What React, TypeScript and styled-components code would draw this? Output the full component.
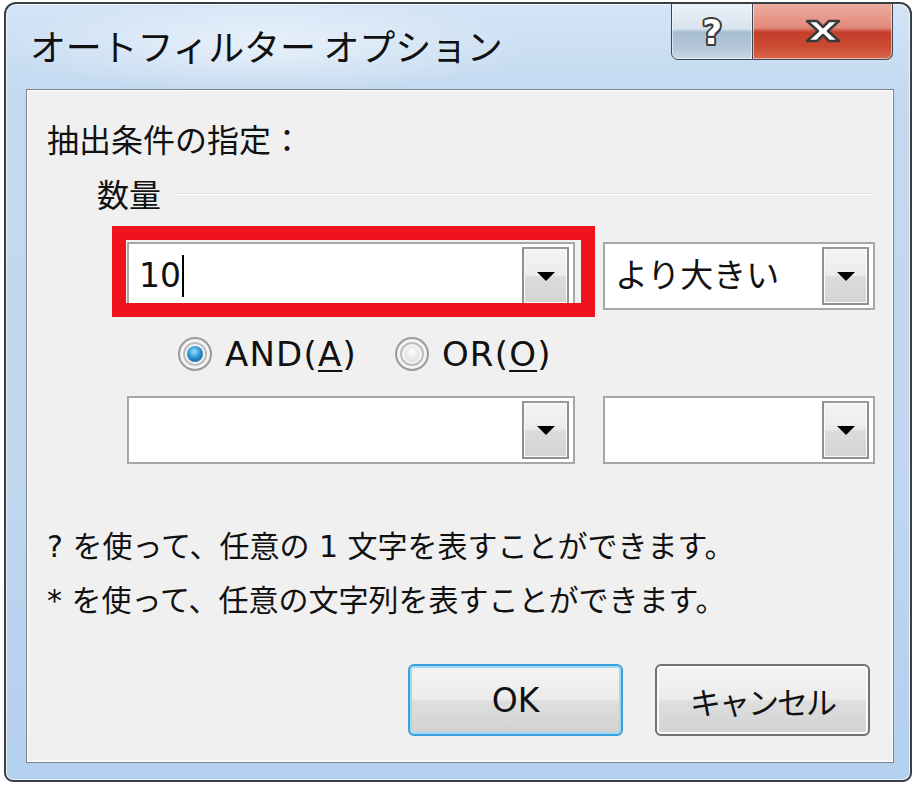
import React from 'react';
import styled, { createGlobalStyle } from 'styled-components';

const GlobalStyle = createGlobalStyle`
  html, body {
    margin: 0;
    padding: 0;
    background: #ffffff;
  }
  body {
    font-family: "DejaVu Sans", "Noto Sans CJK JP", sans-serif;
    color: #111;
  }
  * {
    box-sizing: border-box;
  }
`;

const JP = `"Noto Sans CJK JP", sans-serif`;
const MIXED = `"DejaVu Sans", "Noto Sans CJK JP", sans-serif`;

const Window = styled.div`
  width: 908px;
  height: 780px;
  margin: 2px 4px 4px 4px;
  border: 2px solid #3a3f46;
  border-radius: 12px 12px 9px 9px;
  background:
    radial-gradient(ellipse 380px 70px at 260px 40px, rgba(255, 255, 255, 0.55), rgba(255, 255, 255, 0) 70%),
    linear-gradient(180deg, #d3e4f6 0%, #c3d9f0 12%, #c0d7ef 60%, #b3d0ee 100%);
  box-shadow: inset 0 0 0 1px rgba(255, 255, 255, 0.7);
  display: flex;
  flex-direction: column;
  overflow: hidden;
`;

const TitleBar = styled.div`
  height: 85px;
  display: flex;
  justify-content: space-between;
  align-items: flex-start;
  padding: 0 17px 0 24px;
`;

const Title = styled.div`
  font-family: ${JP};
  font-size: 36px;
  line-height: 40px;
  padding-top: 21px;
  color: #101010;
  letter-spacing: -0.2px;
`;

const CaptionButtons = styled.div`
  display: flex;
  margin-top: -2px;
`;

const CaptionButton = styled.div<{ $kind: 'help' | 'close' }>`
  height: 58px;
  width: ${(p) => (p.$kind === 'help' ? '82px' : '140px')};
  display: flex;
  align-items: center;
  justify-content: center;
  border: 1px solid #3e4650;
  border-left: ${(p) => (p.$kind === 'help' ? '1px solid #3e4650' : 'none')};
  border-radius: ${(p) => (p.$kind === 'help' ? '0 0 0 7px' : '0 0 7px 0')};
  box-shadow: inset 0 0 0 1px rgba(255, 255, 255, 0.55);
  background: ${(p) =>
    p.$kind === 'help'
      ? 'linear-gradient(180deg, #eaf1f8 0%, #d9e4ef 46%, #a9bdd2 52%, #b4c7da 80%, #c9d8e7 100%)'
      : 'linear-gradient(180deg, #eeaea2 0%, #e28a7b 44%, #c43f2b 52%, #cc4a32 78%, #d8664b 100%)'};
`;

const HelpGlyph = styled.span`
  font-family: "DejaVu Sans", sans-serif;
  font-weight: bold;
  font-size: 34px;
  line-height: 1;
  color: #ffffff;
  margin-top: 2px;
  text-shadow:
    -2px 0 #3b3b3b, 2px 0 #3b3b3b, 0 -2px #3b3b3b, 0 2px #3b3b3b,
    -1.5px -1.5px #3b3b3b, 1.5px 1.5px #3b3b3b, -1.5px 1.5px #3b3b3b, 1.5px -1.5px #3b3b3b;
`;

const Panel = styled.div`
  flex: 1;
  margin: 0 16px 17px 20px;
  background: #f0f0f0;
  border: 1px solid #7d848c;
  box-shadow: inset 0 0 0 1px #ffffff;
  padding: 29px 18px 0 20px;
  display: flex;
  flex-direction: column;
`;

const Label = styled.div`
  font-family: ${JP};
  font-size: 32px;
  line-height: 38px;
  color: #111;
`;

const GroupHeader = styled.div`
  display: flex;
  align-items: center;
  gap: 16px;
  margin: 17px 0 0 50px;
`;

const GroupLine = styled.div`
  flex: 1;
  height: 2px;
  background: #dde3ea;
  border-bottom: 1px solid #ffffff;
  margin-top: 2px;
`;

const ComboRow = styled.div<{ $top: number }>`
  display: grid;
  grid-template-columns: 448px 272px;
  gap: 28px;
  margin: ${(p) => p.$top}px 0 0 80px;
`;

const ComboWrap = styled.div`
  position: relative;
`;

const Combo = styled.div`
  height: 68px;
  background: #ffffff;
  border: 2px solid #a7a7a7;
  display: flex;
  align-items: center;
  padding: 3px 4px 3px 10px;
`;

const ComboValue = styled.div`
  flex: 1;
  font-family: ${MIXED};
  font-size: 33px;
  line-height: 40px;
  color: #111;
  display: flex;
  align-items: center;
`;

const Caret = styled.span`
  display: inline-block;
  width: 2px;
  height: 42px;
  background: #000;
  margin-left: 1px;
`;

const DropButton = styled.div`
  width: 47px;
  align-self: stretch;
  border: 2px solid #8f8f8f;
  border-top-color: #9a9a9a;
  box-shadow: inset 0 0 0 1px #fbfbfb;
  background: linear-gradient(180deg, #f4f4f4 0%, #ececec 48%, #dcdcdc 52%, #d3d3d3 100%);
  display: flex;
  align-items: center;
  justify-content: center;
`;

const Highlight = styled.div`
  position: absolute;
  top: -16px;
  left: -15px;
  right: -20px;
  bottom: -7px;
  border: 14px solid #f0121d;
  pointer-events: none;
`;

const RadioRow = styled.div`
  display: flex;
  align-items: center;
  gap: 38px;
  margin: 24px 0 0 131px;
  height: 40px;
`;

const RadioItem = styled.div`
  display: flex;
  align-items: center;
  gap: 13px;
`;

const RadioCircle = styled.div<{ $checked?: boolean }>`
  width: 34px;
  height: 34px;
  border-radius: 50%;
  border: 2px solid #9c9c9c;
  background: radial-gradient(circle at 50% 50%, #ffffff 0%, #f3f3f3 50%, #d9d9d9 100%);
  box-shadow: inset 0 0 0 3px #f4f4f4, inset 0 0 0 5px #bdbdbd;
  display: flex;
  align-items: center;
  justify-content: center;

  &::after {
    content: '';
    width: 16px;
    height: 16px;
    border-radius: 50%;
    background: ${(p) =>
      p.$checked
        ? 'radial-gradient(circle at 45% 35%, #9ee0ff 0%, #2c93d3 45%, #0f4f83 100%)'
        : 'radial-gradient(circle at 50% 40%, #ffffff 0%, #e6e6e6 60%, #cfcfcf 100%)'};
  }
`;

const RadioLabel = styled.span`
  font-family: ${MIXED};
  font-size: 34px;
  line-height: 40px;
  letter-spacing: 1.2px;
  color: #111;

  u {
    text-decoration-thickness: 2px;
    text-underline-offset: 4px;
  }
`;

const HelpText = styled.div`
  margin-top: 56px;
  font-family: ${MIXED};
  font-size: 30px;
  line-height: 54px;
  color: #111;
  white-space: nowrap;
`;

const ButtonRow = styled.div`
  display: flex;
  justify-content: flex-end;
  gap: 32px;
  margin-top: 36px;
  padding-right: 5px;
`;

const DialogButton = styled.div<{ $default?: boolean }>`
  width: 215px;
  height: 72px;
  border-radius: 6px;
  border: ${(p) => (p.$default ? '2px solid #3c9fd9' : '2px solid #727272')};
  box-shadow: ${(p) =>
    p.$default ? 'inset 0 0 0 2px #9fdaf6' : 'inset 0 0 0 2px #fbfbfb'};
  background: linear-gradient(180deg, #f3f3f3 0%, #ececec 48%, #dedede 52%, #d2d2d2 100%);
  display: flex;
  align-items: center;
  justify-content: center;
  font-family: ${MIXED};
  font-size: ${(p) => (p.$default ? '33px' : '31px')};
  letter-spacing: ${(p) => (p.$default ? '0' : '-2px')};
  color: #111;
`;

const Triangle = () => (
  <svg width="18" height="9" viewBox="0 0 18 9">
    <path d="M0 0 H18 L9 9 Z" fill="#000" />
  </svg>
);

const CloseIcon = () => (
  <svg width="42" height="28" viewBox="0 0 42 28">
    <path
      d="M5 4 H15 L21 10 L27 4 H37 L26 14 L37 24 H27 L21 18 L15 24 H5 L16 14 Z"
      fill="#ffffff"
      stroke="#3b3b3b"
      strokeWidth="2.5"
      strokeLinejoin="round"
    />
  </svg>
);

const ComboBox: React.FC<{ children?: React.ReactNode }> = ({ children }) => (
  <Combo>
    <ComboValue>{children}</ComboValue>
    <DropButton>
      <Triangle />
    </DropButton>
  </Combo>
);

const App: React.FC = () => {
  return (
    <>
      <GlobalStyle />
      <Window>
        <TitleBar>
          <Title>オートフィルター オプション</Title>
          <CaptionButtons>
            <CaptionButton $kind="help">
              <HelpGlyph>?</HelpGlyph>
            </CaptionButton>
            <CaptionButton $kind="close">
              <CloseIcon />
            </CaptionButton>
          </CaptionButtons>
        </TitleBar>

        <Panel>
          <Label>抽出条件の指定：</Label>
          <GroupHeader>
            <Label>数量</Label>
            <GroupLine />
          </GroupHeader>

          <ComboRow $top={30}>
            <ComboWrap>
              <ComboBox>
                10<Caret />
              </ComboBox>
              <Highlight />
            </ComboWrap>
            <ComboBox>より大きい</ComboBox>
          </ComboRow>

          <RadioRow>
            <RadioItem>
              <RadioCircle $checked />
              <RadioLabel>
                AND(<u>A</u>)
              </RadioLabel>
            </RadioItem>
            <RadioItem>
              <RadioCircle />
              <RadioLabel>
                OR(<u>O</u>)
              </RadioLabel>
            </RadioItem>
          </RadioRow>

          <ComboRow $top={22}>
            <ComboBox />
            <ComboBox />
          </ComboRow>

          <HelpText>
            ? を使って、任意の 1 文字を表すことができます。
            <br />* を使って、任意の文字列を表すことができます。
          </HelpText>

          <ButtonRow>
            <DialogButton $default>OK</DialogButton>
            <DialogButton>キャンセル</DialogButton>
          </ButtonRow>
        </Panel>
      </Window>
    </>
  );
};

export default App;
